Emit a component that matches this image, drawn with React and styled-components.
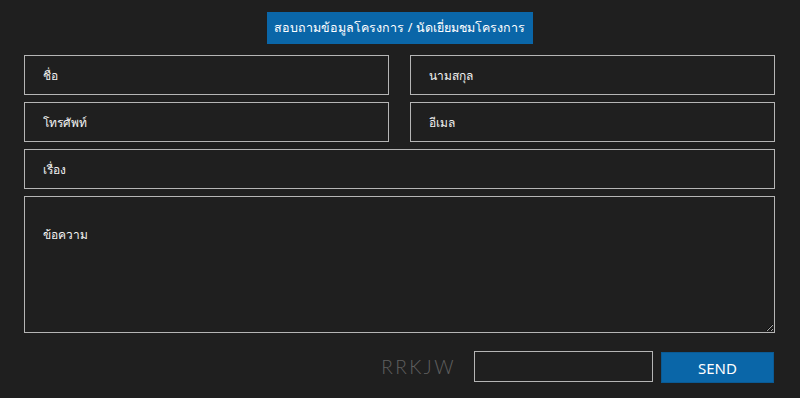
import React from "react";
import styled, { createGlobalStyle } from "styled-components";

const Global = createGlobalStyle`
  html, body { margin: 0; padding: 0; background: #1f1f1f; }
  body { font-family: "Noto Sans", "Open Sans", sans-serif; }
  * { box-sizing: border-box; }
`;

const Page = styled.div`
  width: 800px;
  height: 398px;
  background: #1f1f1f;
  padding: 12px 25px 0 24px;
`;

const TitleWrap = styled.div`
  display: flex;
  justify-content: center;
  margin-bottom: 11px;
`;

const Title = styled.div`
  width: 266px;
  height: 32px;
  background: #0a66a8;
  color: #fff;
  font-size: 12.5px;
  white-space: nowrap;
  display: flex;
  align-items: center;
  justify-content: center;
`;

const Form = styled.form`
  display: flex;
  flex-direction: column;
  gap: 7px;
`;

const Row = styled.div`
  display: grid;
  grid-template-columns: 1fr 1fr;
  column-gap: 21px;
`;

const Field = styled.input`
  height: 40px;
  width: 100%;
  background: #1f1f1f;
  border: 1px solid #b5b5b5;
  color: #fff;
  padding: 0 18px;
  font-family: inherit;
  font-size: 12px;
  outline: none;
  &::placeholder { color: #f2f2f2; opacity: 1; }
`;

const Area = styled.textarea`
  height: 137px;
  width: 100%;
  background: #1f1f1f;
  border: 1px solid #b5b5b5;
  color: #fff;
  padding: 28px 18px 0;
  font-family: inherit;
  font-size: 12px;
  outline: none;
  display: block;
  &::placeholder { color: #f2f2f2; opacity: 1; }
`;

const Bottom = styled.div`
  display: flex;
  justify-content: flex-end;
  align-items: flex-start;
  margin-top: 18px;
  padding-right: 1px;
`;

const Captcha = styled.span`
  color: #606060;
  font-family: "Lato", "Open Sans", sans-serif;
  font-weight: 300;
  font-size: 19px;
  letter-spacing: 2.5px;
  line-height: 31px;
  margin-right: 18px;
`;

const CaptchaInput = styled.input`
  width: 179px;
  height: 31px;
  background: #1f1f1f;
  border: 1px solid #b5b5b5;
  outline: none;
  margin-right: 8px;
`;

const Send = styled.button`
  width: 113px;
  height: 31px;
  margin-top: 1px;
  background: #0a66a8;
  border: 1px solid #0a5a94;
  color: #fff;
  font-family: inherit;
  font-size: 15px;
  cursor: pointer;
`;

export default function App() {
  return (
    <>
      <Global />
      <Page>
        <TitleWrap>
          <Title>สอบถามข้อมูลโครงการ / นัดเยี่ยมชมโครงการ</Title>
        </TitleWrap>
        <Form onSubmit={(e) => e.preventDefault()}>
          <Row>
            <Field placeholder="ชื่อ" />
            <Field placeholder="นามสกุล" />
          </Row>
          <Row>
            <Field placeholder="โทรศัพท์" />
            <Field placeholder="อีเมล" />
          </Row>
          <Field placeholder="เรื่อง" />
          <Area placeholder="ข้อความ" />
        </Form>
        <Bottom>
          <Captcha>RRKJW</Captcha>
          <CaptchaInput />
          <Send type="button">SEND</Send>
        </Bottom>
      </Page>
    </>
  );
}
